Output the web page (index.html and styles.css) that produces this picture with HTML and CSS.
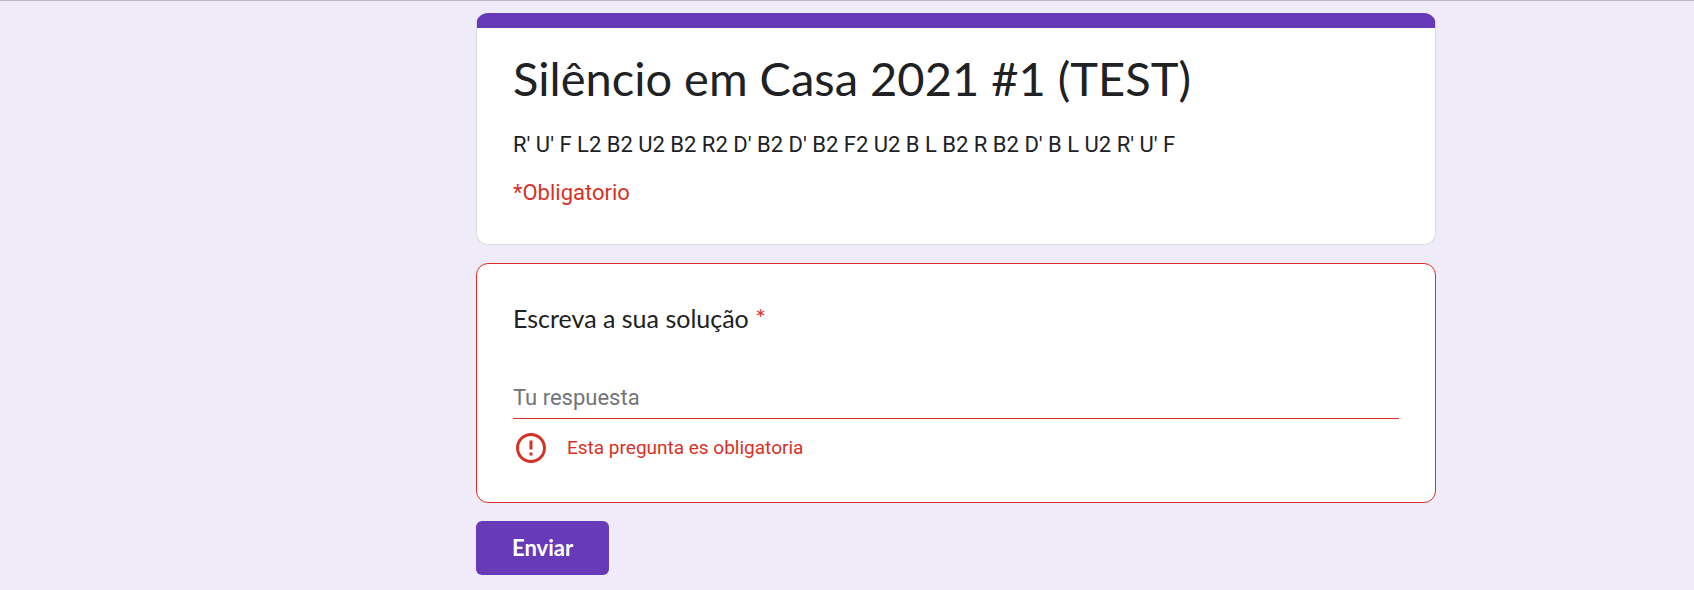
FILE: index.html
```html
<!DOCTYPE html>
<html lang="pt">
<head>
<meta charset="utf-8">
<meta name="viewport" content="width=device-width, initial-scale=1">
<title>Silêncio em Casa 2021 #1 (TEST)</title>
<link rel="stylesheet" href="styles.css">
</head>
<body>
<main class="page">
  <form class="form" novalidate>
    <header class="card intro">
      <h1 class="title">Silêncio em Casa 2021 #1 (TEST)</h1>
      <p class="description">R' U' F L2 B2 U2 B2 R2 D' B2 D' B2 F2 U2 B L B2 R B2 D' B L U2 R' U' F</p>
      <p class="required-note">*Obligatorio</p>
    </header>
    <section class="card question">
      <label class="question-label" for="answer">Escreva a sua solução <span class="asterisk">*</span></label>
      <input class="answer" id="answer" type="text" placeholder="Tu respuesta" required aria-invalid="true" aria-describedby="answer-error">
      <div class="error" id="answer-error">
        <svg class="error-icon" viewBox="0 0 24 24" aria-hidden="true"><path fill="currentColor" d="M11 15h2v2h-2zm0-8h2v6h-2zm.99-5C6.47 2 2 6.48 2 12s4.47 10 9.99 10C17.52 22 22 17.52 22 12S17.52 2 11.99 2zM12 20c-4.42 0-8-3.58-8-8s3.58-8 8-8 8 3.58 8 8-3.58 8-8 8z"/></svg>
        <span>Esta pregunta es obligatoria</span>
      </div>
    </section>
    <button class="submit" type="submit">Enviar</button>
  </form>
</main>
</body>
</html>
```
FILE: styles.css
```css
* {
  box-sizing: border-box;
}

body {
  margin: 0;
  background: #f0ebf8;
  color: #202124;
  font-family: Roboto, "Liberation Sans", sans-serif;
}

.page {
  display: grid;
  grid-template-columns: minmax(0, 476fr) minmax(0, 960px) minmax(0, 258fr);
  border-top: 1px solid #c0b8c9;
  padding: 12px 0 15px;
}

.form {
  grid-column: 2;
  display: flex;
  flex-direction: column;
  gap: 18px;
}

.card {
  padding: 36px;
  background: #fff;
  border: 1px solid #dadce0;
  border-radius: 12px;
}

.intro {
  padding-top: 20px;
  border-top: 15px solid #673ab7;
}

.title {
  margin: 0;
  font: 400 47px/60px Lato, sans-serif;
}

.description {
  margin: 21px 0 0;
  font-size: 22px;
  line-height: 32px;
}

.required-note {
  margin: 16px 0 0;
  font-size: 22px;
  line-height: 32px;
  color: #d93025;
}

.intro {
  padding-bottom: 35px;
}

.question {
  display: flex;
  flex-direction: column;
  border-color: #d93025;
}

.question-label {
  font: 400 25px/36px Lato, sans-serif;
}

.asterisk {
  color: #d93025;
}

.answer {
  width: 100%;
  height: 48px;
  margin-top: 35px;
  padding: 6px 0 0;
  border: 0;
  border-bottom: 1px solid #d93025;
  border-radius: 0;
  background: transparent;
  color: inherit;
  font: 400 22px/36px Roboto, sans-serif;
  outline: none;
}

.answer::placeholder {
  color: #70757a;
  opacity: 1;
}

.error {
  display: flex;
  align-items: center;
  gap: 18px;
  margin-top: 11px;
  color: #d93025;
  font-size: 19px;
  line-height: 36px;
}

.error-icon {
  width: 36px;
  height: 36px;
}

.submit {
  align-self: flex-start;
  height: 54px;
  padding: 0 36px;
  border: 0;
  border-radius: 6px;
  background: #673ab7;
  color: #fff;
  font: 700 22px/54px Lato, sans-serif;
  cursor: pointer;
}
```
